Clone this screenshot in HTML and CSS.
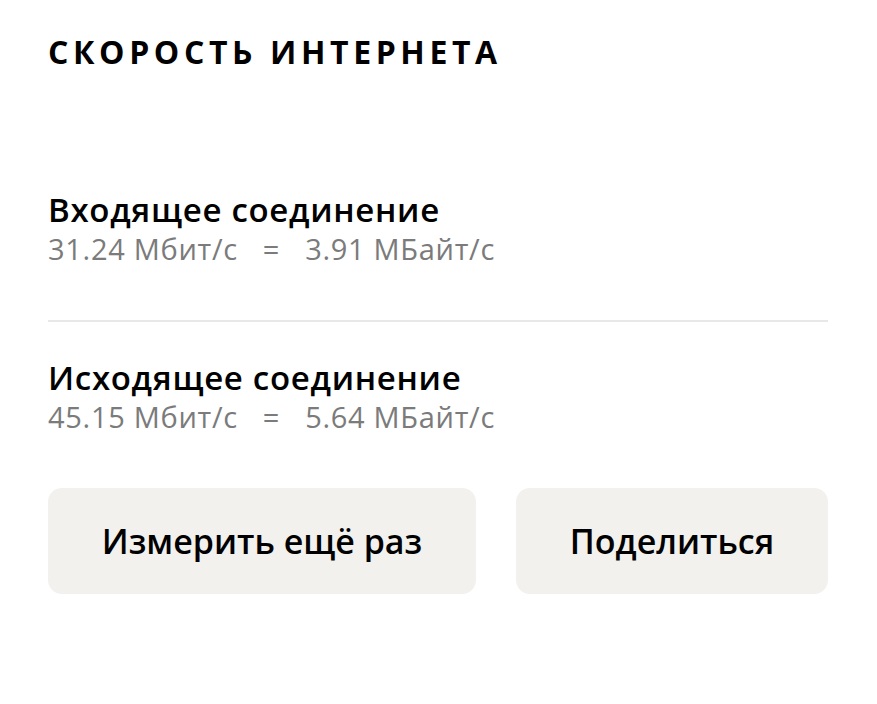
FILE: index.html
```html
<!DOCTYPE html>
<html lang="ru">
<head>
  <meta charset="UTF-8">
  <title>Скорость интернета</title>
  <link rel="stylesheet" href="styles.css">
</head>
<body>
  <div class="speed">
    <h1 class="title">Скорость интернета</h1>

    <div class="row first">
      <div class="row-name">Входящее соединение</div>
      <div class="row-value">
        <span>31.24 Мбит/с</span>
        <span>=</span>
        <span>3.91 МБайт/с</span>
      </div>
    </div>

    <div class="row">
      <div class="row-name">Исходящее соединение</div>
      <div class="row-value">
        <span>45.15 Мбит/с</span>
        <span>=</span>
        <span>5.64 МБайт/с</span>
      </div>
    </div>

    <div class="actions">
      <button class="btn">Измерить ещё раз</button>
      <button class="btn">Поделиться</button>
    </div>
  </div>
</body>
</html>
```

FILE: styles.css
```css
body {
  margin: 0;
  background: #fff;
  font-family: "Open Sans", "Liberation Sans", sans-serif;
  color: #000;
}
.speed {
  width: 780px;
  padding: 32px 0 0 48px;
}
.title {
  margin: 0;
  font-size: 32px;
  font-weight: 700;
  letter-spacing: 4.6px;
  text-transform: uppercase;
  line-height: 40px;
}
.row {
  padding: 22px 0 0;
}
.row.first {
  margin-top: 96px;
  padding-bottom: 53px;
  border-bottom: 2px solid #e8e8e8;
}
.row + .row {
  padding-top: 36px;
}
.row-name {
  font-size: 33px;
  font-weight: 600;
  letter-spacing: 0.7px;
  line-height: 40px;
}
.row-value {
  display: flex;
  gap: 25px;
  font-size: 29px;
  letter-spacing: 0.7px;
  color: #7b7b7b;
  line-height: 36px;
  margin-top: 1px;
}
.actions {
  display: flex;
  gap: 40px;
  margin-top: 53px;
}
.btn {
  flex: 1 1 auto;
  height: 106px;
  padding: 0 50px;
  border: none;
  border-radius: 14px;
  background: #f2f1ed;
  font-family: "Open Sans", "Liberation Sans", sans-serif;
  font-size: 34px;
  font-weight: 600;
  color: #000;
  white-space: nowrap;
  cursor: pointer;
}
```
